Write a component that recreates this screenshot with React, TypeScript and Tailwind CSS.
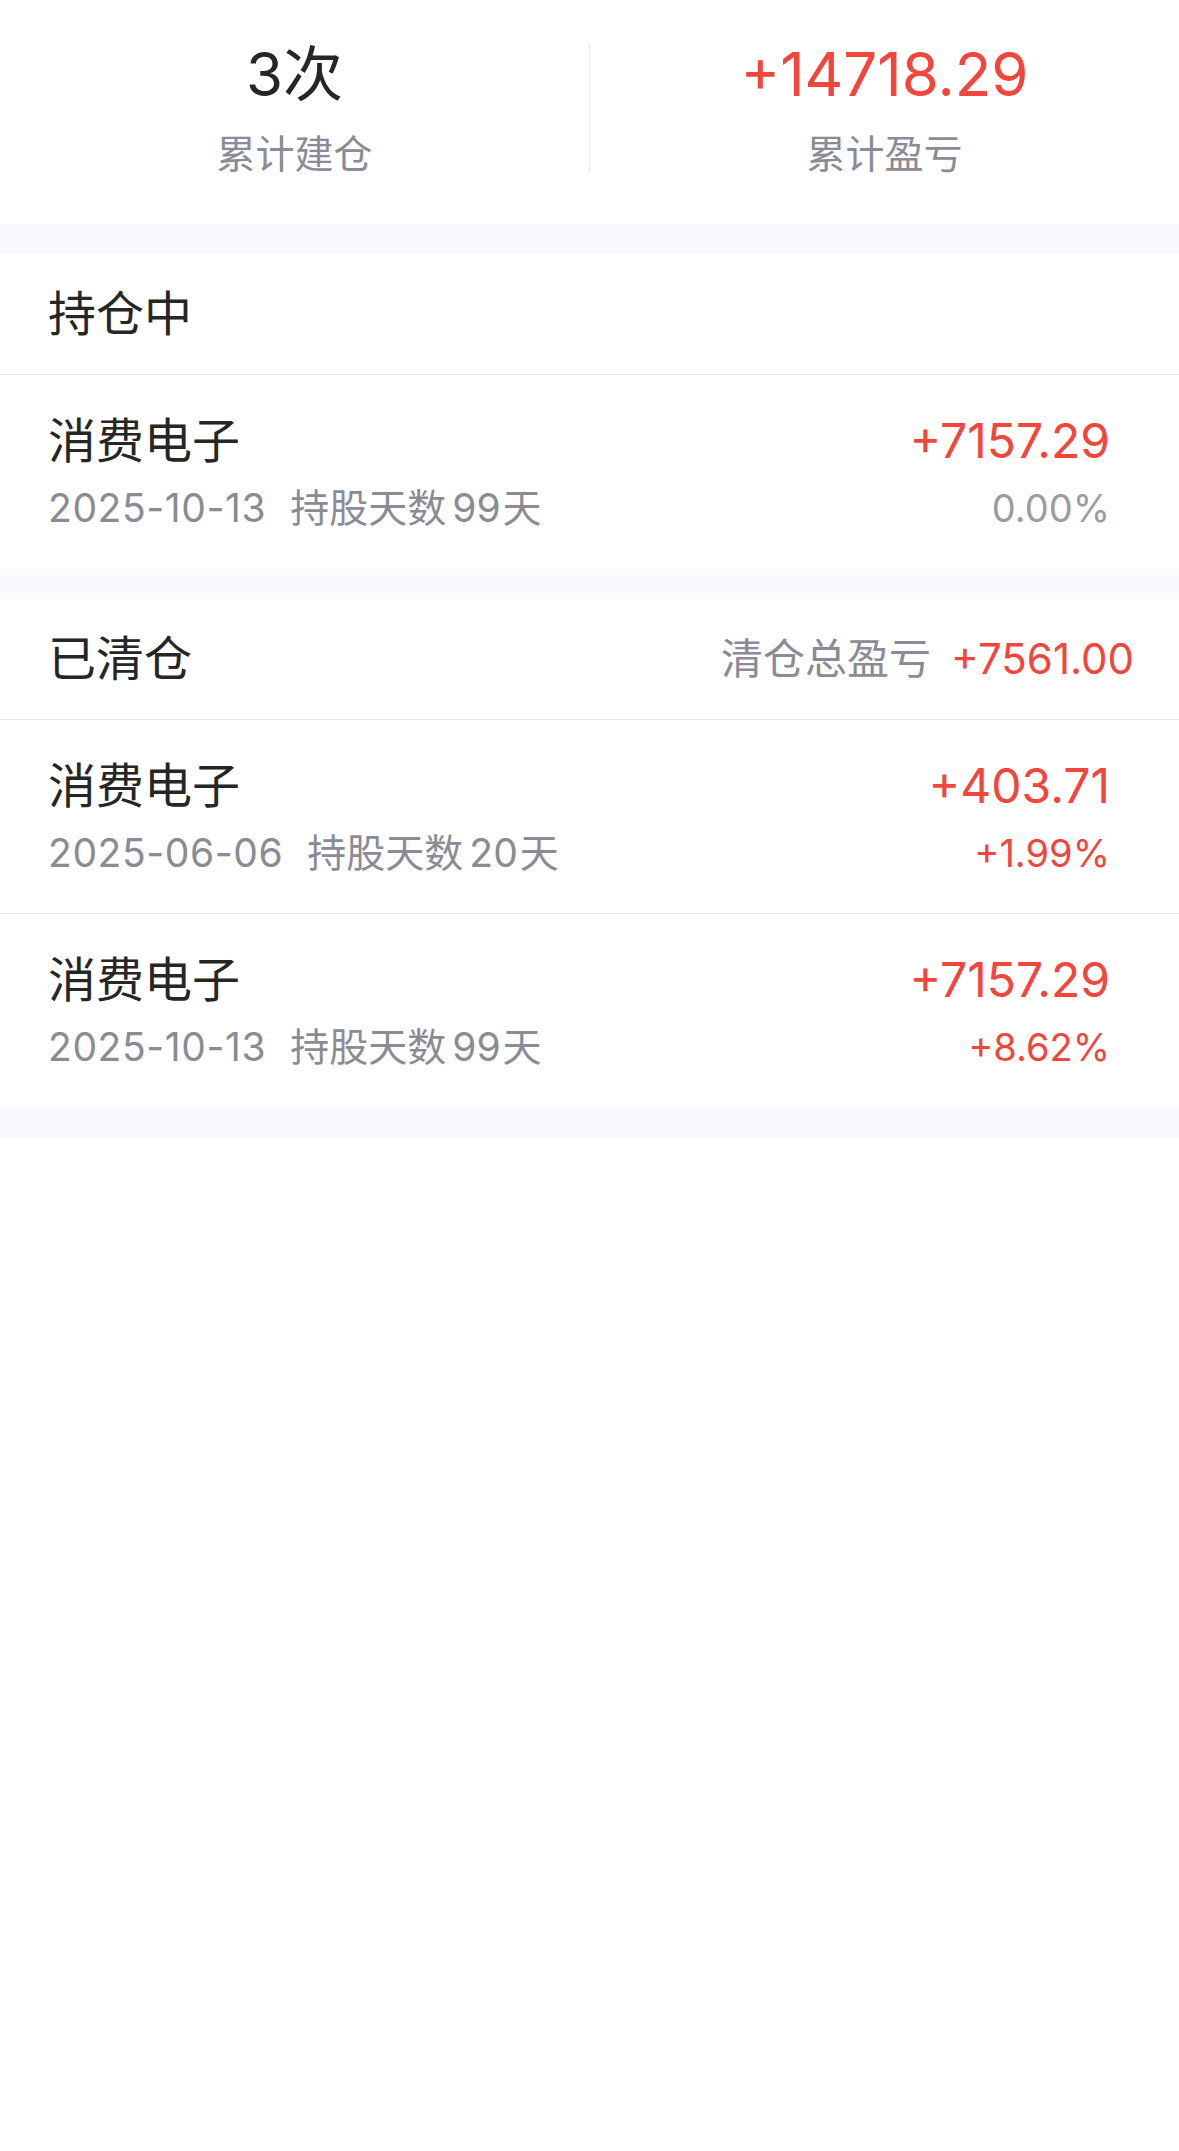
const font = "font-['Inter','Noto_Sans_CJK_SC',sans-serif]"

type Trade = { name: string; date: string; days: number; profit: string; rate: string; flat?: boolean }

const holding: Trade[] = [
  { name: '消费电子', date: '2025-10-13', days: 99, profit: '+7157.29', rate: '0.00%', flat: true },
]

const closed: Trade[] = [
  { name: '消费电子', date: '2025-06-06', days: 20, profit: '+403.71', rate: '+1.99%' },
  { name: '消费电子', date: '2025-10-13', days: 99, profit: '+7157.29', rate: '+8.62%' },
]

function Row({ t, last }: { t: Trade; last?: boolean }) {
  return (
    <div className={`flex items-center justify-between pl-[48px] pr-[69px] h-[194px] ${last ? '' : 'border-b border-[#e8e8ea]'}`}>
      <div className="flex flex-col gap-[16px]">
        <div className="text-[48px] leading-[56px] text-[#262626]">{t.name}</div>
        <div className="flex items-center text-[39px] leading-[46px] text-[#8a8b96]">
          <span className="tracking-[0.6px]">{t.date}</span>
          <span className="ml-[24px]">持股天数</span>
          <span className="ml-[6px]">{t.days}</span>
          <span className="ml-[2px]">天</span>
        </div>
      </div>
      <div className="flex flex-col items-end gap-[16px]">
        <div className="text-[48px] leading-[56px] text-[#f2453b]">{t.profit}</div>
        <div className={`text-[38px] leading-[46px] ${t.flat ? 'text-[#9c9c9f]' : 'text-[#f2453b]'}`}>{t.rate}</div>
      </div>
    </div>
  )
}

function Gap() {
  return <div className="h-[30px] bg-[#f8f9fc]" />
}

export default function App() {
  return (
    <div className={`min-h-[2151px] bg-white ${font}`}>
      {/* summary */}
      <div className="flex h-[224px] items-center pb-[8px]">
        <div className="flex flex-1 flex-col items-center">
          <div className="text-[60px] leading-[70px] text-[#262626]">3次</div>
          <div className="mt-[22px] text-[39px] leading-[46px] text-[#8a8b96]">累计建仓</div>
        </div>
        <div className="w-px h-[130px] bg-[#ececee]" />
        <div className="flex flex-1 flex-col items-center">
          <div className="text-[60px] leading-[70px] text-[#f2453b]">+14718.29</div>
          <div className="mt-[22px] text-[39px] leading-[46px] text-[#8a8b96]">累计盈亏</div>
        </div>
      </div>

      <Gap />

      <div className="flex items-center h-[121px] pl-[48px] border-b border-[#e8e8ea]">
        <div className="text-[48px] leading-[56px] text-[#262626]">持仓中</div>
      </div>
      {holding.map((t, i) => (
        <Row key={i} t={t} last />
      ))}

      <Gap />

      <div className="flex items-center justify-between h-[121px] pl-[48px] pr-[45px] border-b border-[#e8e8ea]">
        <div className="text-[48px] leading-[56px] text-[#262626]">已清仓</div>
        <div className="flex items-center text-[42px] leading-[50px]">
          <span className="text-[#8a8b96]">清仓总盈亏</span>
          <span className="ml-[20px] text-[#f2453b]">+7561.00</span>
        </div>
      </div>
      {closed.map((t, i) => (
        <Row key={i} t={t} last={i === closed.length - 1} />
      ))}

      <Gap />
    </div>
  )
}
